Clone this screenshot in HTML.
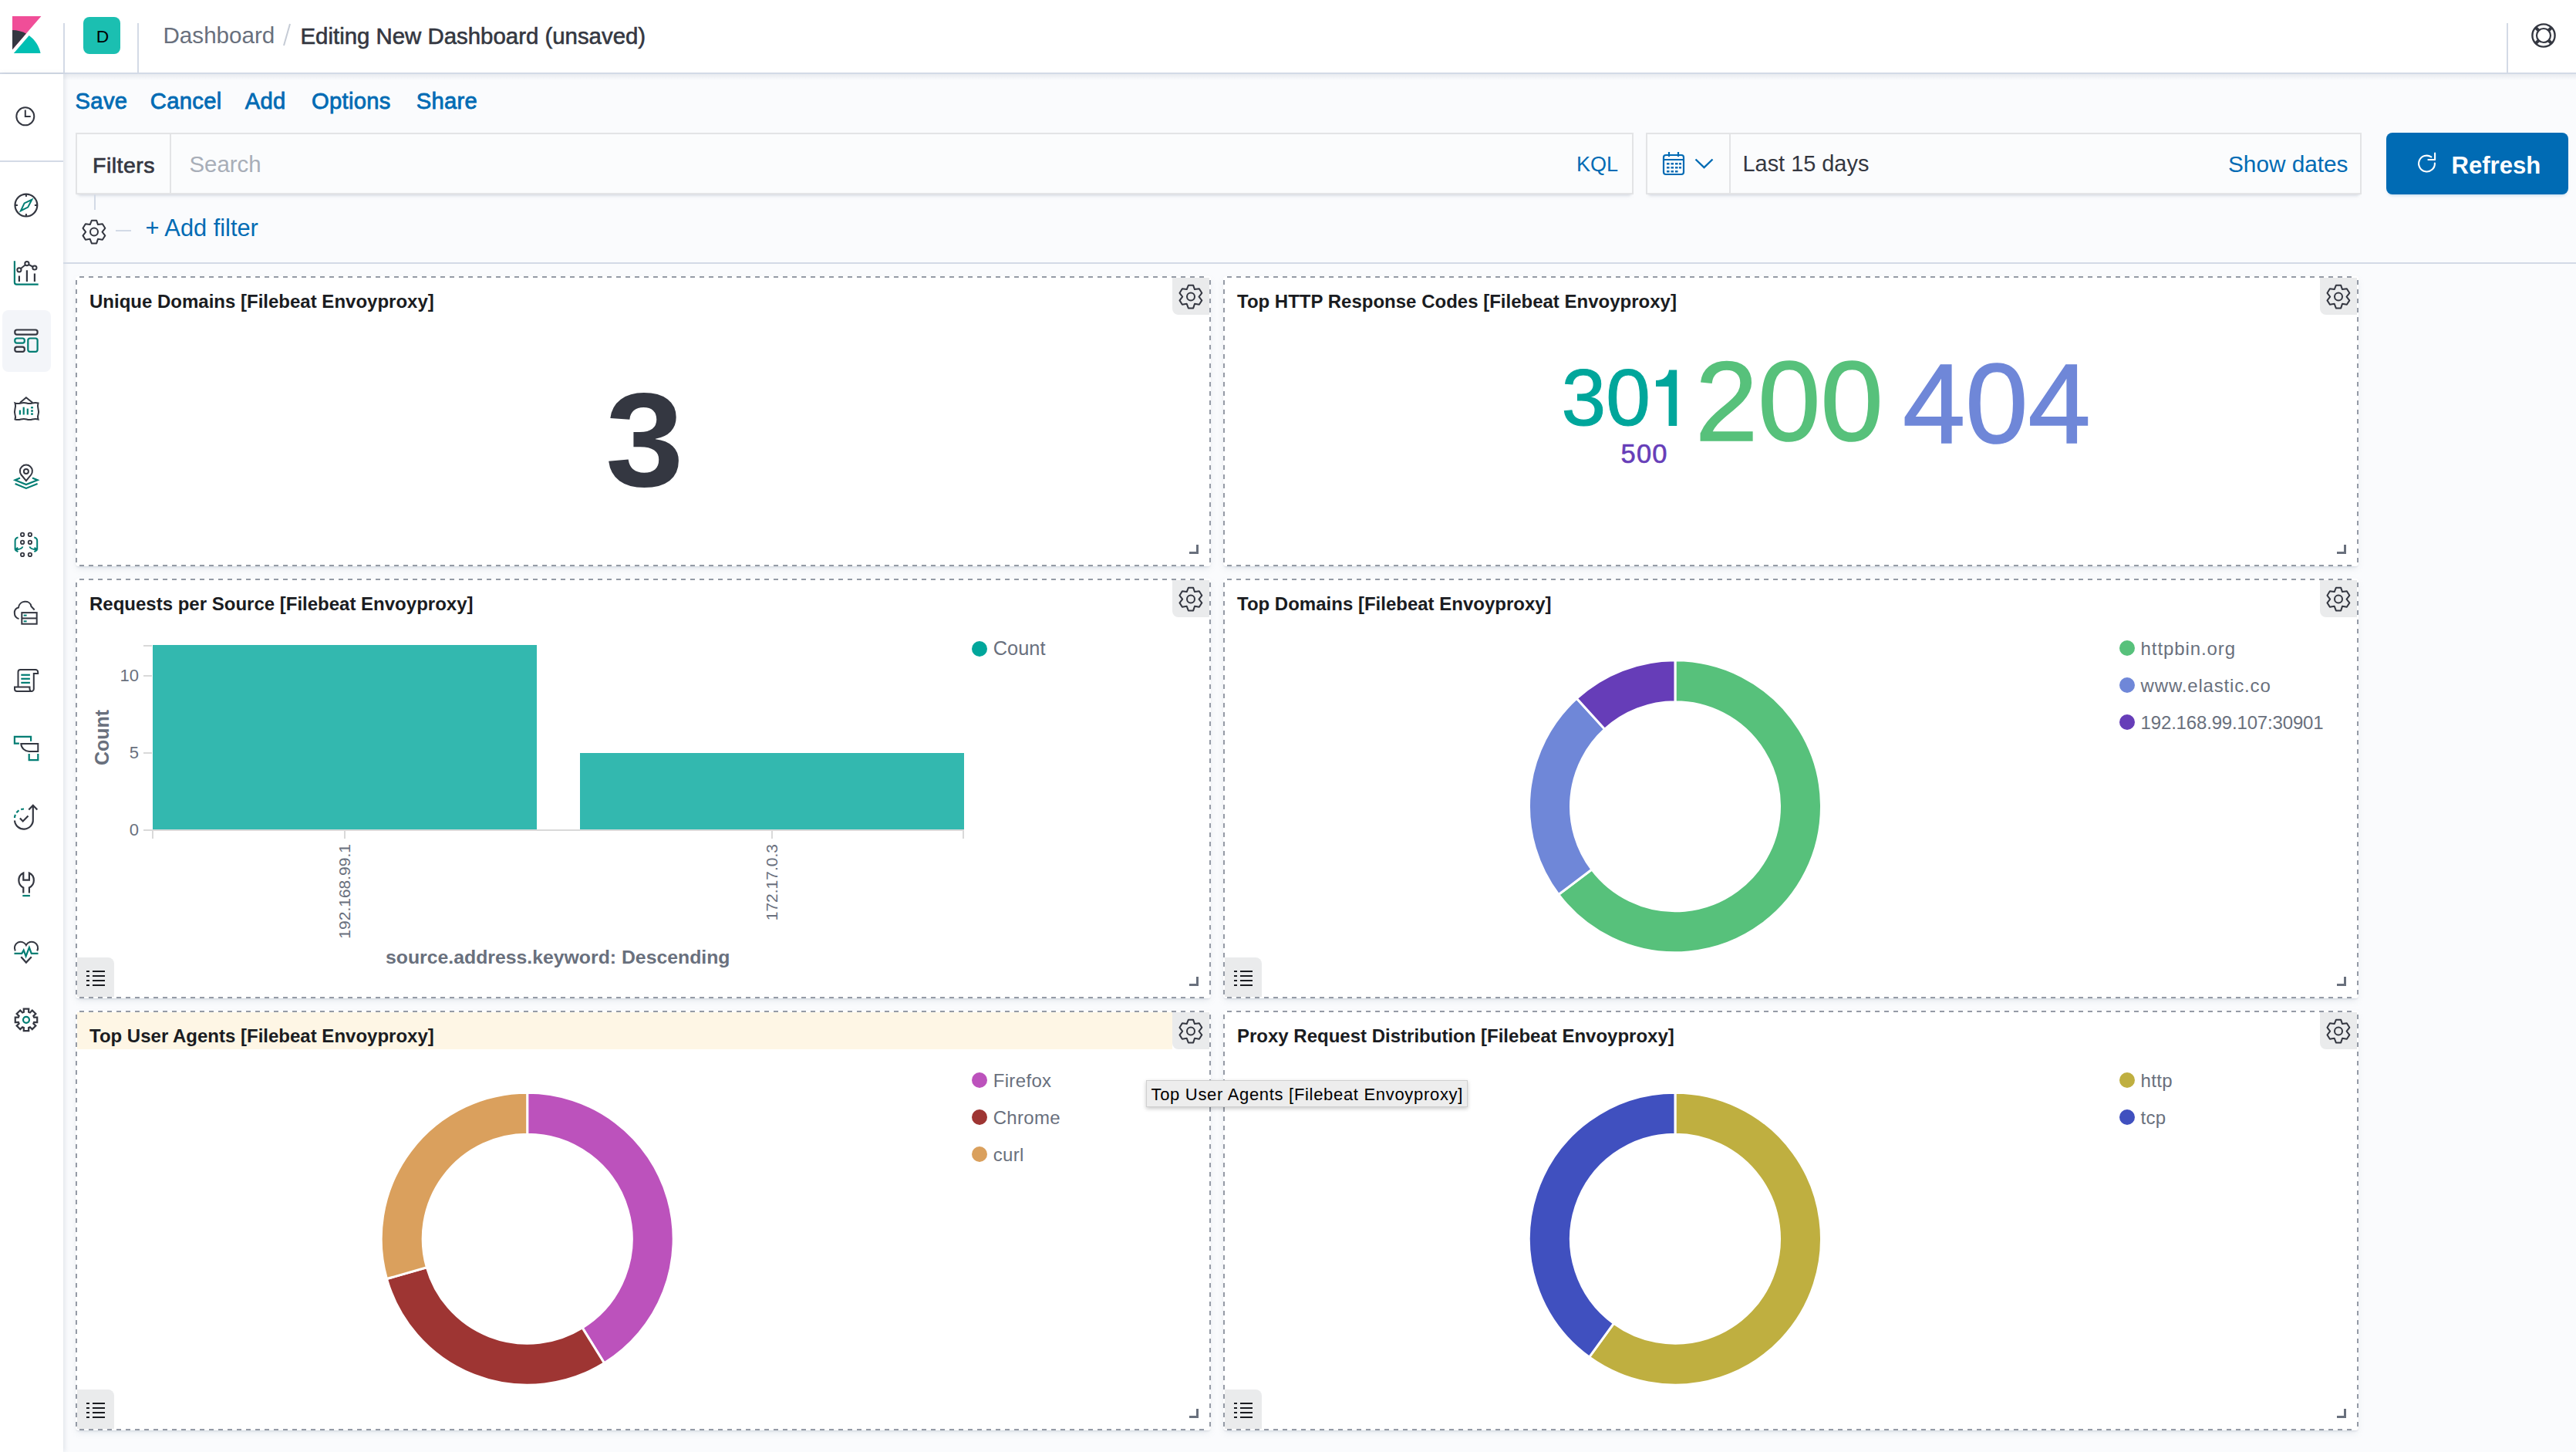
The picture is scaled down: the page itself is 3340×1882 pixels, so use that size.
<!DOCTYPE html><html><head><meta charset="utf-8"><style>
html,body{margin:0;padding:0;}
body{width:3340px;height:1882px;overflow:hidden;position:relative;background:#FAFBFD;font-family:"Liberation Sans", sans-serif;}
.t{position:absolute;white-space:pre;line-height:1;font-family:"Liberation Sans", sans-serif;}
svg{overflow:visible}
</style></head><body><div style="position:absolute;left:0px;top:0px;width:3340px;height:94px;background:#fff;"></div><div style="position:absolute;left:0px;top:94px;width:3340px;height:2px;background:#D3DAE6;"></div><div style="position:absolute;left:82px;top:96px;width:3258px;height:8px;background:linear-gradient(to bottom, rgba(152,162,179,0.18), rgba(152,162,179,0));"></div><svg style="position:absolute;left:10px;top:21px;" width="48" height="48" viewBox="0 0 32 32"><path fill="#F04E98" d="M4 0v28.789L28.935.017z"/><path fill="#343741" d="M4 12v16.789l11.906-13.738A24.721 24.721 0 0 0 4 12"/><path fill="#00BFB3" d="M18.479 16.664L6.268 30.754l-1.073 1.237h23.191c-1.252-6.292-4.883-11.719-9.908-15.327"/></svg><div style="position:absolute;left:82px;top:30px;width:2px;height:64px;background:#D3DAE6;"></div><div style="position:absolute;left:178px;top:30px;width:2px;height:64px;background:#D3DAE6;"></div><div style="position:absolute;left:3250px;top:30px;width:2px;height:64px;background:#D3DAE6;"></div><div style="position:absolute;left:108px;top:22px;width:48px;height:48px;background:#1BBFB1;border-radius:8px;"></div><div class="t" style="left:124.8px;top:35.6px;font-size:22.8px;font-weight:400;color:#000;">D</div><div class="t" style="left:211.5px;top:30.8px;font-size:29.6px;font-weight:400;color:#69707D;">Dashboard</div><svg style="position:absolute;left:366px;top:30px;" width="12" height="30" viewBox="0 0 12 30"><line x1="10" y1="1" x2="2" y2="29" stroke="#C5CBD5" stroke-width="2"/></svg><div class="t" style="left:389.5px;top:31.5px;font-size:29.4px;font-weight:400;color:#343741;-webkit-text-stroke:0.6px #343741;">Editing New Dashboard (unsaved)</div><svg style="position:absolute;left:3282px;top:30px;" width="32" height="32" viewBox="0 0 32 32"><circle cx="16" cy="16" r="14.6" fill="none" stroke="#343741" stroke-width="2.4"/><circle cx="16" cy="16" r="9" fill="none" stroke="#343741" stroke-width="2.2"/><g stroke="#343741" stroke-width="4"><line x1="6" y1="6" x2="10" y2="10"/><line x1="26" y1="6" x2="22" y2="10"/><line x1="6" y1="26" x2="10" y2="22"/><line x1="26" y1="26" x2="22" y2="22"/></g></svg><div style="position:absolute;left:0px;top:96px;width:82px;height:1786px;background:#fff;box-shadow:2px 0 6px rgba(152,162,179,0.25);"></div><div style="position:absolute;left:0px;top:208px;width:82px;height:2px;background:#D3DAE6;"></div><div style="position:absolute;left:3px;top:402px;width:63px;height:80px;background:#F3F5F9;border-radius:8px;"></div><svg style="position:absolute;left:0;top:0" width="82" height="1400"><circle cx="32.8" cy="150.8" r="11.5" fill="none" stroke="#343741" stroke-width="2" stroke-linecap="butt" stroke-linejoin="miter"/><polyline points="32.8,142.5 32.8,151 39.7,151" fill="none" stroke="#343741" stroke-width="2" stroke-linecap="butt" stroke-linejoin="miter"/><circle cx="33.9" cy="266" r="14.4" fill="none" stroke="#343741" stroke-width="2.2" stroke-linecap="butt" stroke-linejoin="miter"/><g stroke="#343741" stroke-width="2"><line x1="33.9" y1="251.6" x2="33.9" y2="255"/><line x1="33.9" y1="277" x2="33.9" y2="280.4"/><line x1="19.5" y1="266" x2="22.9" y2="266"/><line x1="44.9" y1="266" x2="48.3" y2="266"/></g><polygon points="41.3,258.8 36.2,268.6 26.9,273.2 31.6,263.4" fill="none" stroke="#017D73" stroke-width="2" stroke-linecap="butt" stroke-linejoin="miter"/><path d="M18.9 338.3 V366 a2.6 2.6 0 0 0 2.6 2.6 H49.7" fill="none" stroke="#017D73" stroke-width="2.2" stroke-linecap="butt" stroke-linejoin="miter"/><polyline points="24.9,349.8 34.9,341.6 44.9,347" fill="none" stroke="#343741" stroke-width="2" stroke-linecap="butt" stroke-linejoin="miter"/><circle cx="24.9" cy="349.8" r="2.6" fill="#fff" stroke="#343741" stroke-width="2"/><circle cx="34.9" cy="341.6" r="2.6" fill="#fff" stroke="#343741" stroke-width="2"/><circle cx="44.9" cy="347" r="2.6" fill="#fff" stroke="#343741" stroke-width="2"/><g stroke="#343741" stroke-width="2.2"><line x1="24.9" y1="357.5" x2="24.9" y2="365"/><line x1="34.9" y1="350.3" x2="34.9" y2="365"/><line x1="44.9" y1="354.5" x2="44.9" y2="365"/></g><rect x="19.3" y="427.5" width="29.3" height="6.1" rx="2.6" fill="none" stroke="#343741" stroke-width="2.2" stroke-linecap="butt" stroke-linejoin="miter"/><rect x="19.3" y="438.5" width="12.5" height="6.2" rx="2.6" fill="none" stroke="#017D73" stroke-width="2.2" stroke-linecap="butt" stroke-linejoin="miter"/><rect x="19.3" y="449.6" width="12.5" height="6.2" rx="2.6" fill="none" stroke="#343741" stroke-width="2.2" stroke-linecap="butt" stroke-linejoin="miter"/><rect x="36.3" y="438.5" width="12.3" height="17.3" rx="2.6" fill="none" stroke="#017D73" stroke-width="2.2" stroke-linecap="butt" stroke-linejoin="miter"/><polyline points="25.9,522 33.9,515.2 42.3,522" fill="none" stroke="#343741" stroke-width="2" stroke-linecap="butt" stroke-linejoin="miter"/><path d="M19.5 522.5 q3.5 1.2 7.5 0 t7.5 0 t7.5 0 t7.5 0 q-1.2 3.8 0 7.5 t0 7.5 q-1.2 2.7 0 6 q-3.5 -1.2 -7.5 0 t-7.5 0 t-7.5 0 t-7.5 0 q1.2 -3 0 -6 t0 -7.5 t0 -7.5 z" fill="none" stroke="#343741" stroke-width="2" stroke-linecap="butt" stroke-linejoin="miter"/><g stroke="#017D73" stroke-width="2.2"><line x1="25.9" y1="531.6" x2="25.9" y2="537.5"/><line x1="30.7" y1="527.7" x2="30.7" y2="537.5"/><line x1="35.8" y1="529.6" x2="35.8" y2="537.5"/><line x1="40" y1="528.3" x2="43" y2="528.3"/><line x1="40" y1="532.6" x2="43" y2="532.6"/><line x1="40" y1="536.6" x2="43" y2="536.6"/></g><path d="M33.9 623.2 L27.6 615.5 A8 8 0 1 1 40.2 615.5 Z" fill="none" stroke="#343741" stroke-width="2" stroke-linecap="butt" stroke-linejoin="miter"/><circle cx="33.9" cy="611" r="3" fill="none" stroke="#343741" stroke-width="2" stroke-linecap="butt" stroke-linejoin="miter"/><polyline points="26,619.5 19.6,622.3 33.9,628 48.6,622.3 42,619.5" fill="none" stroke="#017D73" stroke-width="2.2" stroke-linecap="butt" stroke-linejoin="miter"/><polyline points="19.6,627.1 33.9,632.9 48.6,627.1" fill="none" stroke="#017D73" stroke-width="2.2" stroke-linecap="butt" stroke-linejoin="miter"/><circle cx="29.1" cy="692.9" r="2.2" fill="none" stroke="#343741" stroke-width="1.8" stroke-linecap="butt" stroke-linejoin="miter"/><circle cx="29.1" cy="702.9" r="2.2" fill="none" stroke="#343741" stroke-width="1.8" stroke-linecap="butt" stroke-linejoin="miter"/><circle cx="29.1" cy="718.9" r="2.2" fill="none" stroke="#343741" stroke-width="1.8" stroke-linecap="butt" stroke-linejoin="miter"/><circle cx="38.9" cy="692.9" r="2.2" fill="none" stroke="#343741" stroke-width="1.8" stroke-linecap="butt" stroke-linejoin="miter"/><circle cx="38.9" cy="702.9" r="2.2" fill="none" stroke="#343741" stroke-width="1.8" stroke-linecap="butt" stroke-linejoin="miter"/><circle cx="38.9" cy="718.9" r="2.2" fill="none" stroke="#343741" stroke-width="1.8" stroke-linecap="butt" stroke-linejoin="miter"/><path d="M23.5 696.5 Q19.6 697.5 19.6 701 V712.8 M29.3 708.5 Q29 711.5 20 712.8 M19.6 712.8 l3.6 -3 M19.6 712.8 l3.8 2.4" fill="none" stroke="#017D73" stroke-width="2" stroke-linecap="butt" stroke-linejoin="miter"/><path d="M44.3 696.5 Q48.2 697.5 48.2 701 V712.8 M38.5 708.5 Q38.8 711.5 47.8 712.8 M48.2 712.8 l-3.6 -3 M48.2 712.8 l-3.8 2.4" fill="none" stroke="#017D73" stroke-width="2" stroke-linecap="butt" stroke-linejoin="miter"/><path d="M24.5 802.1 C17 800 17 789 24 787.5 C25 778 39 777 40.5 786 L44.7 790.5" fill="none" stroke="#343741" stroke-width="2" stroke-linecap="butt" stroke-linejoin="miter"/><rect x="28.3" y="794.1" width="19.4" height="14.6" fill="none" stroke="#343741" stroke-width="2" stroke-linecap="butt" stroke-linejoin="miter"/><line x1="28.3" y1="801.4" x2="47.7" y2="801.4" stroke="#343741" stroke-width="2"/><g stroke="#017D73" stroke-width="2"><line x1="30.7" y1="797.6" x2="34.6" y2="797.6"/><line x1="30.7" y1="805.3" x2="34.6" y2="805.3"/></g><path d="M23.5 890.5 V871 a3 3 0 0 1 3 -3 H46 a3.2 3.2 0 0 1 3.2 3.2 V873 H43.8 V893 a3 3 0 0 1 -3 3 H22 a3 3 0 0 1 -3 -3 V890.5 H38.5 V893 a3 3 0 0 0 3 3" fill="none" stroke="#343741" stroke-width="2" stroke-linecap="butt" stroke-linejoin="miter"/><g stroke="#017D73" stroke-width="2.2"><line x1="27.3" y1="874.8" x2="38.9" y2="874.8"/><line x1="27.3" y1="879.8" x2="38.9" y2="879.8"/><line x1="27.3" y1="884.9" x2="38.9" y2="884.9"/></g><polyline points="24.9,963.6 18.9,963.6 18.9,954.9 40.1,954.9 40.1,960.7" fill="none" stroke="#017D73" stroke-width="2.2" stroke-linecap="butt" stroke-linejoin="miter"/><path d="M27.3 964.1 H49.3 V973.9 H37.9 A10.5 10 0 0 1 27.3 964.1 Z" fill="none" stroke="#343741" stroke-width="2" stroke-linecap="butt" stroke-linejoin="miter"/><polyline points="37.7,977.1 37.7,985.1 49.3,985.1 49.3,977.1" fill="none" stroke="#017D73" stroke-width="2.2" stroke-linecap="butt" stroke-linejoin="miter"/><path d="M19 1060 A12 12 0 0 1 31 1048.5" fill="none" stroke="#017D73" stroke-width="2.2" stroke-dasharray="4.2 3"/><path d="M19 1063.5 A11.9 11.9 0 0 0 42.8 1062 V1043.8 M37.3 1049.5 L42.8 1043.8 L48.3 1049.5" fill="none" stroke="#343741" stroke-width="2.2" stroke-linecap="butt" stroke-linejoin="miter"/><polyline points="25.9,1060.4 29.7,1064.4 36.5,1057.5" fill="none" stroke="#343741" stroke-width="2.2" stroke-linecap="butt" stroke-linejoin="miter"/><path d="M30.3 1157.4 V1150.4 A10.4 10.4 0 0 1 30.3 1131.6 V1140.6 H37.9 V1131.6 A10.4 10.4 0 0 1 37.9 1150.4 V1157.4" fill="none" stroke="#343741" stroke-width="2.2" stroke-linecap="butt" stroke-linejoin="miter"/><line x1="29.3" y1="1161" x2="38.9" y2="1161" stroke="#017D73" stroke-width="2.2"/><path d="M19.8 1232.5 A7.2 7.2 0 1 1 33.9 1225 A7.2 7.2 0 1 1 48.2 1232.5" fill="none" stroke="#343741" stroke-width="2" stroke-linecap="butt" stroke-linejoin="miter"/><polyline points="18.5,1235.9 28.3,1235.9 30.7,1231.6 33.6,1239.3 37.9,1228.2 40.8,1235.9 49.5,1235.9" fill="none" stroke="#017D73" stroke-width="2.2" stroke-linecap="butt" stroke-linejoin="miter"/><polyline points="27.3,1240.2 33.9,1247.6 40.8,1240.2" fill="none" stroke="#343741" stroke-width="2.2" stroke-linecap="butt" stroke-linejoin="miter"/><polygon points="30.87,1311.67 30.77,1307.56 37.23,1307.56 37.13,1311.67 38.95,1312.42 41.78,1309.45 46.35,1314.02 43.38,1316.85 44.13,1318.67 48.24,1318.57 48.24,1325.03 44.13,1324.93 43.38,1326.75 46.35,1329.58 41.78,1334.15 38.95,1331.18 37.13,1331.93 37.23,1336.04 30.77,1336.04 30.87,1331.93 29.05,1331.18 26.22,1334.15 21.65,1329.58 24.62,1326.75 23.87,1324.93 19.76,1325.03 19.76,1318.57 23.87,1318.67 24.62,1316.85 21.65,1314.02 26.22,1309.45 29.05,1312.42" fill="none" stroke="#343741" stroke-width="2.2" stroke-linecap="butt" stroke-linejoin="miter"/><circle cx="34" cy="1321.8" r="4" fill="none" stroke="#017D73" stroke-width="2.2" stroke-linecap="butt" stroke-linejoin="miter"/></svg><div class="t" style="left:97.6px;top:116.7px;font-size:29.2px;font-weight:400;color:#006BB4;letter-spacing:0.3px;-webkit-text-stroke:0.8px #006BB4;">Save</div><div class="t" style="left:194.8px;top:116.7px;font-size:29.2px;font-weight:400;color:#006BB4;letter-spacing:0.3px;-webkit-text-stroke:0.8px #006BB4;">Cancel</div><div class="t" style="left:317.8px;top:116.7px;font-size:29.2px;font-weight:400;color:#006BB4;letter-spacing:0.3px;-webkit-text-stroke:0.8px #006BB4;">Add</div><div class="t" style="left:404.0px;top:116.7px;font-size:29.2px;font-weight:400;color:#006BB4;letter-spacing:0.3px;-webkit-text-stroke:0.8px #006BB4;">Options</div><div class="t" style="left:539.7px;top:116.7px;font-size:29.2px;font-weight:400;color:#006BB4;letter-spacing:0.3px;-webkit-text-stroke:0.8px #006BB4;">Share</div><div style="position:absolute;left:98px;top:172px;width:2020px;height:80px;background:#FBFCFD;box-shadow:inset 0 0 0 2px rgba(16,22,26,0.1), 0 2px 2px -2px rgba(152,162,179,0.3), 0 6px 4px -4px rgba(152,162,179,0.3);"></div><div style="position:absolute;left:220px;top:174px;width:2px;height:76px;background:rgba(16,22,26,0.1);"></div><div class="t" style="left:120.0px;top:199.6px;font-size:28.5px;font-weight:400;color:#343741;letter-spacing:0.5px;-webkit-text-stroke:0.7px #343741;">Filters</div><div class="t" style="left:245.5px;top:197.8px;font-size:29.4px;font-weight:400;color:#A8AEB8;">Search</div><div class="t" style="left:2044.0px;top:199.6px;font-size:27px;font-weight:400;color:#006BB4;">KQL</div><div style="position:absolute;left:2134px;top:172px;width:928px;height:80px;background:#FBFCFD;box-shadow:inset 0 0 0 2px rgba(16,22,26,0.1), 0 2px 2px -2px rgba(152,162,179,0.3), 0 6px 4px -4px rgba(152,162,179,0.3);"></div><div style="position:absolute;left:2242px;top:174px;width:2px;height:76px;background:rgba(16,22,26,0.1);"></div><svg style="position:absolute;left:2155px;top:196px;" width="30" height="32" viewBox="0 0 30 32"><rect x="2" y="5" width="26" height="25" rx="3" fill="none" stroke="#006BB4" stroke-width="2.2"/><line x1="2" y1="11" x2="28" y2="11" stroke="#006BB4" stroke-width="2"/><line x1="9" y1="1" x2="9" y2="7" stroke="#006BB4" stroke-width="2.2"/><line x1="21" y1="1" x2="21" y2="7" stroke="#006BB4" stroke-width="2.2"/><g fill="#006BB4"><rect x="6" y="15" width="3.5" height="2.5"/><rect x="11.5" y="15" width="3.5" height="2.5"/><rect x="17" y="15" width="3.5" height="2.5"/><rect x="22" y="15" width="3" height="2.5"/><rect x="6" y="20" width="3.5" height="2.5"/><rect x="11.5" y="20" width="3.5" height="2.5"/><rect x="17" y="20" width="3.5" height="2.5"/><rect x="22" y="20" width="3" height="2.5"/><rect x="6" y="25" width="3.5" height="2.5"/><rect x="11.5" y="25" width="3.5" height="2.5"/><rect x="17" y="25" width="3.5" height="2.5"/></g></svg><svg style="position:absolute;left:2197px;top:205px;" width="26" height="14" viewBox="0 0 26 14"><polyline points="1.5,1.5 12.5,12 23.5,1.5" fill="none" stroke="#006BB4" stroke-width="2.4"/></svg><div class="t" style="left:2259.5px;top:198.4px;font-size:28.9px;font-weight:400;color:#343741;">Last 15 days</div><div class="t" style="left:2889.0px;top:197.7px;font-size:29.75px;font-weight:400;color:#006BB4;">Show dates</div><div style="position:absolute;left:3094px;top:172px;width:236px;height:80px;background:#006BB4;border-radius:8px;box-shadow:0 3px 4px -2px rgba(0,107,180,0.25);"></div><svg style="position:absolute;left:3132px;top:196px;" width="28" height="30" viewBox="0 0 28 30"><path d="M24.9 15.5 A10.4 10.4 0 1 1 20.3 7.4" fill="none" stroke="#fff" stroke-width="2.1" stroke-linecap="round"/><polyline points="25.1,2.5 25.1,11 16.4,11" fill="none" stroke="#fff" stroke-width="2.1" stroke-linecap="round" stroke-linejoin="round"/></svg><div class="t" style="left:3178.5px;top:198.6px;font-size:31.1px;font-weight:700;color:#fff;">Refresh</div><div style="position:absolute;left:122px;top:252px;width:2px;height:20px;background:#D3DAE6;"></div><svg style="position:absolute;left:98px;top:276px;" width="48" height="48" viewBox="0 0 48 48"><g transform="translate(24 24.6) scale(0.96) translate(-23.9 -23.8)"><path d="M20.6 8.4 L27.2 8.4 L29.1 13.9 L35.2 13.1 L38.8 18.8 L34.9 23.8 L38.8 28.8 L35.2 34.3 L29.1 33.4 L27.2 39.2 L20.6 39.2 L18.4 33.4 L12.3 34.3 L8.8 28.8 L12.6 23.8 L8.8 18.8 L12.3 13.1 L18.4 13.9 Z" fill="none" stroke="#343741" stroke-width="2.1" stroke-linejoin="round"/><circle cx="23.9" cy="23.8" r="5.2" fill="none" stroke="#343741" stroke-width="2.1"/></g></svg><div style="position:absolute;left:150px;top:298px;width:20px;height:2px;background:#D3DAE6;"></div><div class="t" style="left:188.5px;top:281.3px;font-size:30.8px;font-weight:400;color:#006BB4;">+ Add filter</div><div style="position:absolute;left:82px;top:340px;width:3258px;height:2px;background:#D3DAE6;"></div><div style="position:absolute;left:98px;top:358px;width:1472px;height:376px;box-sizing:border-box;background:#fff;border-radius:4px;box-shadow:0 2px 2px -1px rgba(152,162,179,0.3), 0 4px 8px -2px rgba(152,162,179,0.25);"></div><svg style="position:absolute;left:98px;top:358px;z-index:1;" width="1472" height="376" viewBox="0 0 1472 376"><path d="M5 1 H1467" stroke="#959BA6" stroke-width="2" stroke-dasharray="6 6" fill="none"/><path d="M5 375 H1467" stroke="#959BA6" stroke-width="2" stroke-dasharray="6 6" fill="none"/><path d="M1 5 V371" stroke="#959BA6" stroke-width="2" stroke-dasharray="6 6" fill="none"/><path d="M1471 5 V371" stroke="#959BA6" stroke-width="2" stroke-dasharray="6 6" fill="none"/><path d="M1 5 A4 4 0 0 1 5 1 M1467 1 A4 4 0 0 1 1471 5 M1471 371 A4 4 0 0 1 1467 375 M5 375 A4 4 0 0 1 1 371" stroke="#98A2B3" stroke-width="2" fill="none" opacity="0.0"/></svg><div style="position:absolute;left:1520px;top:360px;width:48px;height:48px;background:rgba(52,55,65,0.1);border-bottom-left-radius:8px;"></div><svg style="position:absolute;left:1520px;top:360px;" width="48" height="48" viewBox="0 0 48 48"><g transform="translate(24 24.6) scale(0.96) translate(-23.9 -23.8)"><path d="M20.6 8.4 L27.2 8.4 L29.1 13.9 L35.2 13.1 L38.8 18.8 L34.9 23.8 L38.8 28.8 L35.2 34.3 L29.1 33.4 L27.2 39.2 L20.6 39.2 L18.4 33.4 L12.3 34.3 L8.8 28.8 L12.6 23.8 L8.8 18.8 L12.3 13.1 L18.4 13.9 Z" fill="none" stroke="#343741" stroke-width="2.1" stroke-linejoin="round"/><circle cx="23.9" cy="23.8" r="5.2" fill="none" stroke="#343741" stroke-width="2.1"/></g></svg><div class="t" style="left:116.0px;top:378.6px;font-size:24px;font-weight:700;color:#1A1C21;">Unique Domains [Filebeat Envoyproxy]</div><div style="position:absolute;left:1542px;top:715px;width:12px;height:3px;background:#69707D;"></div><div style="position:absolute;left:1551px;top:706px;width:3px;height:12px;background:#69707D;"></div><div style="position:absolute;left:1586px;top:358px;width:1472px;height:376px;box-sizing:border-box;background:#fff;border-radius:4px;box-shadow:0 2px 2px -1px rgba(152,162,179,0.3), 0 4px 8px -2px rgba(152,162,179,0.25);"></div><svg style="position:absolute;left:1586px;top:358px;z-index:1;" width="1472" height="376" viewBox="0 0 1472 376"><path d="M5 1 H1467" stroke="#959BA6" stroke-width="2" stroke-dasharray="6 6" fill="none"/><path d="M5 375 H1467" stroke="#959BA6" stroke-width="2" stroke-dasharray="6 6" fill="none"/><path d="M1 5 V371" stroke="#959BA6" stroke-width="2" stroke-dasharray="6 6" fill="none"/><path d="M1471 5 V371" stroke="#959BA6" stroke-width="2" stroke-dasharray="6 6" fill="none"/><path d="M1 5 A4 4 0 0 1 5 1 M1467 1 A4 4 0 0 1 1471 5 M1471 371 A4 4 0 0 1 1467 375 M5 375 A4 4 0 0 1 1 371" stroke="#98A2B3" stroke-width="2" fill="none" opacity="0.0"/></svg><div style="position:absolute;left:3008px;top:360px;width:48px;height:48px;background:rgba(52,55,65,0.1);border-bottom-left-radius:8px;"></div><svg style="position:absolute;left:3008px;top:360px;" width="48" height="48" viewBox="0 0 48 48"><g transform="translate(24 24.6) scale(0.96) translate(-23.9 -23.8)"><path d="M20.6 8.4 L27.2 8.4 L29.1 13.9 L35.2 13.1 L38.8 18.8 L34.9 23.8 L38.8 28.8 L35.2 34.3 L29.1 33.4 L27.2 39.2 L20.6 39.2 L18.4 33.4 L12.3 34.3 L8.8 28.8 L12.6 23.8 L8.8 18.8 L12.3 13.1 L18.4 13.9 Z" fill="none" stroke="#343741" stroke-width="2.1" stroke-linejoin="round"/><circle cx="23.9" cy="23.8" r="5.2" fill="none" stroke="#343741" stroke-width="2.1"/></g></svg><div class="t" style="left:1604.0px;top:378.6px;font-size:24px;font-weight:700;color:#1A1C21;">Top HTTP Response Codes [Filebeat Envoyproxy]</div><div style="position:absolute;left:3030px;top:715px;width:12px;height:3px;background:#69707D;"></div><div style="position:absolute;left:3039px;top:706px;width:3px;height:12px;background:#69707D;"></div><div style="position:absolute;left:98px;top:750px;width:1472px;height:544px;box-sizing:border-box;background:#fff;border-radius:4px;box-shadow:0 2px 2px -1px rgba(152,162,179,0.3), 0 4px 8px -2px rgba(152,162,179,0.25);"></div><svg style="position:absolute;left:98px;top:750px;z-index:1;" width="1472" height="544" viewBox="0 0 1472 544"><path d="M5 1 H1467" stroke="#959BA6" stroke-width="2" stroke-dasharray="6 6" fill="none"/><path d="M5 543 H1467" stroke="#959BA6" stroke-width="2" stroke-dasharray="6 6" fill="none"/><path d="M1 5 V539" stroke="#959BA6" stroke-width="2" stroke-dasharray="6 6" fill="none"/><path d="M1471 5 V539" stroke="#959BA6" stroke-width="2" stroke-dasharray="6 6" fill="none"/><path d="M1 5 A4 4 0 0 1 5 1 M1467 1 A4 4 0 0 1 1471 5 M1471 539 A4 4 0 0 1 1467 543 M5 543 A4 4 0 0 1 1 539" stroke="#98A2B3" stroke-width="2" fill="none" opacity="0.0"/></svg><div style="position:absolute;left:1520px;top:752px;width:48px;height:48px;background:rgba(52,55,65,0.1);border-bottom-left-radius:8px;"></div><svg style="position:absolute;left:1520px;top:752px;" width="48" height="48" viewBox="0 0 48 48"><g transform="translate(24 24.6) scale(0.96) translate(-23.9 -23.8)"><path d="M20.6 8.4 L27.2 8.4 L29.1 13.9 L35.2 13.1 L38.8 18.8 L34.9 23.8 L38.8 28.8 L35.2 34.3 L29.1 33.4 L27.2 39.2 L20.6 39.2 L18.4 33.4 L12.3 34.3 L8.8 28.8 L12.6 23.8 L8.8 18.8 L12.3 13.1 L18.4 13.9 Z" fill="none" stroke="#343741" stroke-width="2.1" stroke-linejoin="round"/><circle cx="23.9" cy="23.8" r="5.2" fill="none" stroke="#343741" stroke-width="2.1"/></g></svg><div class="t" style="left:116.0px;top:770.6px;font-size:24px;font-weight:700;color:#1A1C21;">Requests per Source [Filebeat Envoyproxy]</div><div style="position:absolute;left:1542px;top:1275px;width:12px;height:3px;background:#69707D;"></div><div style="position:absolute;left:1551px;top:1266px;width:3px;height:12px;background:#69707D;"></div><div style="position:absolute;left:100px;top:1241px;width:48px;height:51px;background:rgba(52,55,65,0.1);border-top-right-radius:8px;"></div><svg style="position:absolute;left:112px;top:1258px;" width="24" height="20" viewBox="0 0 24 20"><g fill="#1a1c21"><rect x="0" y="0" width="4" height="2"/><rect x="0" y="6" width="4" height="2"/><rect x="0" y="12" width="4" height="2"/><rect x="0" y="18" width="4" height="2"/><rect x="8" y="0" width="16" height="2"/><rect x="8" y="6" width="16" height="2"/><rect x="8" y="12" width="16" height="2"/><rect x="8" y="18" width="16" height="2"/></g></svg><div style="position:absolute;left:1586px;top:750px;width:1472px;height:544px;box-sizing:border-box;background:#fff;border-radius:4px;box-shadow:0 2px 2px -1px rgba(152,162,179,0.3), 0 4px 8px -2px rgba(152,162,179,0.25);"></div><svg style="position:absolute;left:1586px;top:750px;z-index:1;" width="1472" height="544" viewBox="0 0 1472 544"><path d="M5 1 H1467" stroke="#959BA6" stroke-width="2" stroke-dasharray="6 6" fill="none"/><path d="M5 543 H1467" stroke="#959BA6" stroke-width="2" stroke-dasharray="6 6" fill="none"/><path d="M1 5 V539" stroke="#959BA6" stroke-width="2" stroke-dasharray="6 6" fill="none"/><path d="M1471 5 V539" stroke="#959BA6" stroke-width="2" stroke-dasharray="6 6" fill="none"/><path d="M1 5 A4 4 0 0 1 5 1 M1467 1 A4 4 0 0 1 1471 5 M1471 539 A4 4 0 0 1 1467 543 M5 543 A4 4 0 0 1 1 539" stroke="#98A2B3" stroke-width="2" fill="none" opacity="0.0"/></svg><div style="position:absolute;left:3008px;top:752px;width:48px;height:48px;background:rgba(52,55,65,0.1);border-bottom-left-radius:8px;"></div><svg style="position:absolute;left:3008px;top:752px;" width="48" height="48" viewBox="0 0 48 48"><g transform="translate(24 24.6) scale(0.96) translate(-23.9 -23.8)"><path d="M20.6 8.4 L27.2 8.4 L29.1 13.9 L35.2 13.1 L38.8 18.8 L34.9 23.8 L38.8 28.8 L35.2 34.3 L29.1 33.4 L27.2 39.2 L20.6 39.2 L18.4 33.4 L12.3 34.3 L8.8 28.8 L12.6 23.8 L8.8 18.8 L12.3 13.1 L18.4 13.9 Z" fill="none" stroke="#343741" stroke-width="2.1" stroke-linejoin="round"/><circle cx="23.9" cy="23.8" r="5.2" fill="none" stroke="#343741" stroke-width="2.1"/></g></svg><div class="t" style="left:1604.0px;top:770.6px;font-size:24px;font-weight:700;color:#1A1C21;">Top Domains [Filebeat Envoyproxy]</div><div style="position:absolute;left:3030px;top:1275px;width:12px;height:3px;background:#69707D;"></div><div style="position:absolute;left:3039px;top:1266px;width:3px;height:12px;background:#69707D;"></div><div style="position:absolute;left:1588px;top:1241px;width:48px;height:51px;background:rgba(52,55,65,0.1);border-top-right-radius:8px;"></div><svg style="position:absolute;left:1600px;top:1258px;" width="24" height="20" viewBox="0 0 24 20"><g fill="#1a1c21"><rect x="0" y="0" width="4" height="2"/><rect x="0" y="6" width="4" height="2"/><rect x="0" y="12" width="4" height="2"/><rect x="0" y="18" width="4" height="2"/><rect x="8" y="0" width="16" height="2"/><rect x="8" y="6" width="16" height="2"/><rect x="8" y="12" width="16" height="2"/><rect x="8" y="18" width="16" height="2"/></g></svg><div style="position:absolute;left:98px;top:1310px;width:1472px;height:544px;box-sizing:border-box;background:#fff;border-radius:4px;box-shadow:0 2px 2px -1px rgba(152,162,179,0.3), 0 4px 8px -2px rgba(152,162,179,0.25);"></div><svg style="position:absolute;left:98px;top:1310px;z-index:1;" width="1472" height="544" viewBox="0 0 1472 544"><path d="M5 1 H1467" stroke="#959BA6" stroke-width="2" stroke-dasharray="6 6" fill="none"/><path d="M5 543 H1467" stroke="#959BA6" stroke-width="2" stroke-dasharray="6 6" fill="none"/><path d="M1 5 V539" stroke="#959BA6" stroke-width="2" stroke-dasharray="6 6" fill="none"/><path d="M1471 5 V539" stroke="#959BA6" stroke-width="2" stroke-dasharray="6 6" fill="none"/><path d="M1 5 A4 4 0 0 1 5 1 M1467 1 A4 4 0 0 1 1471 5 M1471 539 A4 4 0 0 1 1467 543 M5 543 A4 4 0 0 1 1 539" stroke="#98A2B3" stroke-width="2" fill="none" opacity="0.0"/></svg><div style="position:absolute;left:100px;top:1312px;width:1420px;height:48px;background:#FEF6E5;"></div><div style="position:absolute;left:1520px;top:1312px;width:48px;height:48px;background:rgba(52,55,65,0.1);border-bottom-left-radius:8px;"></div><svg style="position:absolute;left:1520px;top:1312px;" width="48" height="48" viewBox="0 0 48 48"><g transform="translate(24 24.6) scale(0.96) translate(-23.9 -23.8)"><path d="M20.6 8.4 L27.2 8.4 L29.1 13.9 L35.2 13.1 L38.8 18.8 L34.9 23.8 L38.8 28.8 L35.2 34.3 L29.1 33.4 L27.2 39.2 L20.6 39.2 L18.4 33.4 L12.3 34.3 L8.8 28.8 L12.6 23.8 L8.8 18.8 L12.3 13.1 L18.4 13.9 Z" fill="none" stroke="#343741" stroke-width="2.1" stroke-linejoin="round"/><circle cx="23.9" cy="23.8" r="5.2" fill="none" stroke="#343741" stroke-width="2.1"/></g></svg><div class="t" style="left:116.0px;top:1330.6px;font-size:24px;font-weight:700;color:#1A1C21;">Top User Agents [Filebeat Envoyproxy]</div><div style="position:absolute;left:1542px;top:1835px;width:12px;height:3px;background:#69707D;"></div><div style="position:absolute;left:1551px;top:1826px;width:3px;height:12px;background:#69707D;"></div><div style="position:absolute;left:100px;top:1801px;width:48px;height:51px;background:rgba(52,55,65,0.1);border-top-right-radius:8px;"></div><svg style="position:absolute;left:112px;top:1818px;" width="24" height="20" viewBox="0 0 24 20"><g fill="#1a1c21"><rect x="0" y="0" width="4" height="2"/><rect x="0" y="6" width="4" height="2"/><rect x="0" y="12" width="4" height="2"/><rect x="0" y="18" width="4" height="2"/><rect x="8" y="0" width="16" height="2"/><rect x="8" y="6" width="16" height="2"/><rect x="8" y="12" width="16" height="2"/><rect x="8" y="18" width="16" height="2"/></g></svg><div style="position:absolute;left:1586px;top:1310px;width:1472px;height:544px;box-sizing:border-box;background:#fff;border-radius:4px;box-shadow:0 2px 2px -1px rgba(152,162,179,0.3), 0 4px 8px -2px rgba(152,162,179,0.25);"></div><svg style="position:absolute;left:1586px;top:1310px;z-index:1;" width="1472" height="544" viewBox="0 0 1472 544"><path d="M5 1 H1467" stroke="#959BA6" stroke-width="2" stroke-dasharray="6 6" fill="none"/><path d="M5 543 H1467" stroke="#959BA6" stroke-width="2" stroke-dasharray="6 6" fill="none"/><path d="M1 5 V539" stroke="#959BA6" stroke-width="2" stroke-dasharray="6 6" fill="none"/><path d="M1471 5 V539" stroke="#959BA6" stroke-width="2" stroke-dasharray="6 6" fill="none"/><path d="M1 5 A4 4 0 0 1 5 1 M1467 1 A4 4 0 0 1 1471 5 M1471 539 A4 4 0 0 1 1467 543 M5 543 A4 4 0 0 1 1 539" stroke="#98A2B3" stroke-width="2" fill="none" opacity="0.0"/></svg><div style="position:absolute;left:3008px;top:1312px;width:48px;height:48px;background:rgba(52,55,65,0.1);border-bottom-left-radius:8px;"></div><svg style="position:absolute;left:3008px;top:1312px;" width="48" height="48" viewBox="0 0 48 48"><g transform="translate(24 24.6) scale(0.96) translate(-23.9 -23.8)"><path d="M20.6 8.4 L27.2 8.4 L29.1 13.9 L35.2 13.1 L38.8 18.8 L34.9 23.8 L38.8 28.8 L35.2 34.3 L29.1 33.4 L27.2 39.2 L20.6 39.2 L18.4 33.4 L12.3 34.3 L8.8 28.8 L12.6 23.8 L8.8 18.8 L12.3 13.1 L18.4 13.9 Z" fill="none" stroke="#343741" stroke-width="2.1" stroke-linejoin="round"/><circle cx="23.9" cy="23.8" r="5.2" fill="none" stroke="#343741" stroke-width="2.1"/></g></svg><div class="t" style="left:1604.0px;top:1330.6px;font-size:24px;font-weight:700;color:#1A1C21;">Proxy Request Distribution [Filebeat Envoyproxy]</div><div style="position:absolute;left:3030px;top:1835px;width:12px;height:3px;background:#69707D;"></div><div style="position:absolute;left:3039px;top:1826px;width:3px;height:12px;background:#69707D;"></div><div style="position:absolute;left:1588px;top:1801px;width:48px;height:51px;background:rgba(52,55,65,0.1);border-top-right-radius:8px;"></div><svg style="position:absolute;left:1600px;top:1818px;" width="24" height="20" viewBox="0 0 24 20"><g fill="#1a1c21"><rect x="0" y="0" width="4" height="2"/><rect x="0" y="6" width="4" height="2"/><rect x="0" y="12" width="4" height="2"/><rect x="0" y="18" width="4" height="2"/><rect x="8" y="0" width="16" height="2"/><rect x="8" y="6" width="16" height="2"/><rect x="8" y="12" width="16" height="2"/><rect x="8" y="18" width="16" height="2"/></g></svg><div class="t" style="left:785.0px;top:483.5px;font-size:173px;font-weight:700;color:#343741;transform:scaleX(1.055);transform-origin:0 0;">3</div><div class="t" style="left:2024.5px;top:464.4px;font-size:103.7px;font-weight:400;color:#00a69b;-webkit-text-stroke:1.2px #00a69b;">30</div><svg style="position:absolute;left:0;top:0" width="3340" height="700"><path d="M2164 479.6 H2174.2 V552 H2163.6 V501 H2147 V493 C2157 493 2163 488 2164 479.6 Z" fill="#00a69b"/></svg><div class="t" style="left:2198.0px;top:448.4px;font-size:146px;font-weight:400;color:#57c17b;-webkit-text-stroke:1.5px #57c17b;">200</div><div class="t" style="left:2467.0px;top:450.9px;font-size:146px;font-weight:400;color:#6f87d8;-webkit-text-stroke:1.5px #6f87d8;">404</div><div class="t" style="left:2101.5px;top:570.7px;font-size:34.5px;font-weight:400;color:#663db8;letter-spacing:1.2px;-webkit-text-stroke:0.6px #663db8;">500</div><div style="position:absolute;left:186px;top:836px;width:11px;height:2px;background:#D9D9D9;"></div><div style="position:absolute;left:186px;top:875px;width:11px;height:2px;background:#D9D9D9;"></div><div style="position:absolute;left:186px;top:975px;width:11px;height:2px;background:#D9D9D9;"></div><div style="position:absolute;left:186px;top:1075px;width:11px;height:2px;background:#D9D9D9;"></div><div class="t" style="right:3160.0px;top:864.8px;font-size:22px;font-weight:400;color:#69707D;">10</div><div class="t" style="right:3160.0px;top:964.8px;font-size:22px;font-weight:400;color:#69707D;">5</div><div class="t" style="right:3160.0px;top:1064.8px;font-size:22px;font-weight:400;color:#69707D;">0</div><div style="position:absolute;left:198px;top:836px;width:498px;height:239px;background:#33B8AF;"></div><div style="position:absolute;left:752px;top:976px;width:498px;height:99px;background:#33B8AF;"></div><div style="position:absolute;left:186px;top:1075px;width:1064px;height:2px;background:#D9D9D9;"></div><div style="position:absolute;left:197px;top:1077px;width:2px;height:10px;background:#D9D9D9;"></div><div style="position:absolute;left:446px;top:1077px;width:2px;height:10px;background:#D9D9D9;"></div><div style="position:absolute;left:1000px;top:1077px;width:2px;height:10px;background:#D9D9D9;"></div><div style="position:absolute;left:1248px;top:1077px;width:2px;height:10px;background:#D9D9D9;"></div><div class="t" style="left:131.5px;top:955.5px;font-size:25px;font-weight:700;color:#69707D;transform:translate(-50%,-50%) rotate(-90deg);">Count</div><div class="t" style="left:446px;top:1094px;font-size:21px;color:#69707D;transform-origin:0 0;transform:translate(-10px,0) rotate(-90deg) translate(-100%,0);">192.168.99.1</div><div class="t" style="left:1000px;top:1094px;font-size:21px;color:#69707D;transform-origin:0 0;transform:translate(-10px,0) rotate(-90deg) translate(-100%,0);">172.17.0.3</div><div class="t" style="left:500.0px;top:1229.4px;font-size:24.8px;font-weight:700;color:#69707D;">source.address.keyword: Descending</div><div style="position:absolute;left:1260.2px;top:831.2px;width:20px;height:20px;border-radius:50%;background:#00a69b;"></div><div class="t" style="left:1287.7px;top:828.4px;font-size:25.4px;font-weight:400;color:#69707D;">Count</div><svg style="position:absolute;left:0;top:0" width="3340" height="1882"><path d="M2172.00,855.80 A189.5,189.5 0 1 1 2020.78,1159.50 L2063.87,1126.96 A135.5,135.5 0 1 0 2172.00,909.80 Z" fill="#57c17b" stroke="#fff" stroke-width="3" stroke-linejoin="miter"/><path d="M2020.78,1159.50 A189.5,189.5 0 0 1 2044.33,905.26 L2080.71,945.16 A135.5,135.5 0 0 0 2063.87,1126.96 Z" fill="#6f87d8" stroke="#fff" stroke-width="3" stroke-linejoin="miter"/><path d="M2044.33,905.26 A189.5,189.5 0 0 1 2172.00,855.80 L2172.00,909.80 A135.5,135.5 0 0 0 2080.71,945.16 Z" fill="#663db8" stroke="#fff" stroke-width="3" stroke-linejoin="miter"/></svg><div style="position:absolute;left:2748.1px;top:830.4px;width:20px;height:20px;border-radius:50%;background:#57c17b;"></div><div class="t" style="left:2775.6px;top:828.8px;font-size:24px;font-weight:400;color:#69707D;letter-spacing:0.9px;">httpbin.org</div><div style="position:absolute;left:2748.1px;top:878.4px;width:20px;height:20px;border-radius:50%;background:#6f87d8;"></div><div class="t" style="left:2775.6px;top:876.8px;font-size:24px;font-weight:400;color:#69707D;letter-spacing:0.83px;">www.elastic.co</div><div style="position:absolute;left:2748.1px;top:926.4px;width:20px;height:20px;border-radius:50%;background:#663db8;"></div><div class="t" style="left:2775.6px;top:924.8px;font-size:24px;font-weight:400;color:#69707D;letter-spacing:-0.17px;">192.168.99.107:30901</div><svg style="position:absolute;left:0;top:0" width="3340" height="1882"><path d="M683.70,1416.20 A189.5,189.5 0 0 1 783.46,1766.82 L755.03,1720.90 A135.5,135.5 0 0 0 683.70,1470.20 Z" fill="#bc52bc" stroke="#fff" stroke-width="3" stroke-linejoin="miter"/><path d="M783.46,1766.82 A189.5,189.5 0 0 1 501.43,1657.56 L553.37,1642.78 A135.5,135.5 0 0 0 755.03,1720.90 Z" fill="#9e3533" stroke="#fff" stroke-width="3" stroke-linejoin="miter"/><path d="M501.43,1657.56 A189.5,189.5 0 0 1 683.70,1416.20 L683.70,1470.20 A135.5,135.5 0 0 0 553.37,1642.78 Z" fill="#daa05d" stroke="#fff" stroke-width="3" stroke-linejoin="miter"/></svg><div style="position:absolute;left:1260.2px;top:1390.2px;width:20px;height:20px;border-radius:50%;background:#bc52bc;"></div><div class="t" style="left:1287.7px;top:1388.6px;font-size:24px;font-weight:400;color:#69707D;letter-spacing:0.34px;">Firefox</div><div style="position:absolute;left:1260.2px;top:1438.2px;width:20px;height:20px;border-radius:50%;background:#9e3533;"></div><div class="t" style="left:1287.7px;top:1436.6px;font-size:24px;font-weight:400;color:#69707D;letter-spacing:0.3px;">Chrome</div><div style="position:absolute;left:1260.2px;top:1486.2px;width:20px;height:20px;border-radius:50%;background:#daa05d;"></div><div class="t" style="left:1287.7px;top:1484.6px;font-size:24px;font-weight:400;color:#69707D;letter-spacing:0.3px;">curl</div><svg style="position:absolute;left:0;top:0" width="3340" height="1882"><path d="M2172.00,1416.20 A189.5,189.5 0 1 1 2060.61,1759.01 L2092.36,1715.32 A135.5,135.5 0 1 0 2172.00,1470.20 Z" fill="#bfaf40" stroke="#fff" stroke-width="3" stroke-linejoin="miter"/><path d="M2060.61,1759.01 A189.5,189.5 0 0 1 2172.00,1416.20 L2172.00,1470.20 A135.5,135.5 0 0 0 2092.36,1715.32 Z" fill="#4050bf" stroke="#fff" stroke-width="3" stroke-linejoin="miter"/></svg><div style="position:absolute;left:2748.1px;top:1390.2px;width:20px;height:20px;border-radius:50%;background:#bfaf40;"></div><div class="t" style="left:2775.6px;top:1388.6px;font-size:24px;font-weight:400;color:#69707D;letter-spacing:0.3px;">http</div><div style="position:absolute;left:2748.1px;top:1438.2px;width:20px;height:20px;border-radius:50%;background:#4050bf;"></div><div class="t" style="left:2775.6px;top:1436.6px;font-size:24px;font-weight:400;color:#69707D;letter-spacing:0.3px;">tcp</div><div style="position:absolute;left:1486px;top:1400px;width:417px;height:35px;box-sizing:border-box;background:#EDEDED;border:1px solid #D0D0D0;box-shadow:0 2px 5px rgba(0,0,0,0.22);z-index:10;"></div><div class="t" style="left:1492.5px;top:1407.6px;font-size:22px;font-weight:400;color:#000;letter-spacing:0.69px;z-index:11;">Top User Agents [Filebeat Envoyproxy]</div></body></html>
